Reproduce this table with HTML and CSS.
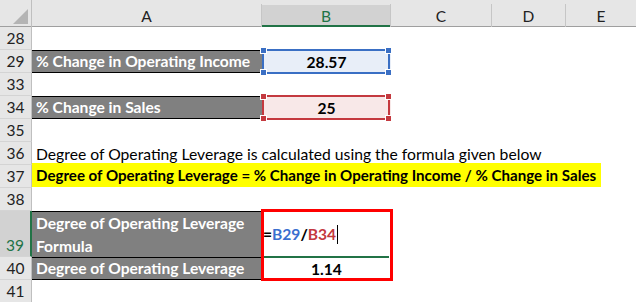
FILE: index.html
```html
<!DOCTYPE html>
<html>
<head>
<meta charset="utf-8">
<link rel="stylesheet" href="styles.css">
</head>
<body>
<div class="sheet">
  <div class="corner"><span class="tri"></span></div>
  <div class="colhead">A</div>
  <div class="colhead sel">B</div>
  <div class="colhead">C</div>
  <div class="colhead">D</div>
  <div class="colhead last">E</div>

  <div class="rowhead">28</div>
  <div class="cell"></div><div class="cell"></div><div class="cell"></div><div class="cell"></div><div class="cell"></div>

  <div class="rowhead">29</div>
  <div class="cell dark">% Change in Operating Income</div>
  <div class="cell num ref-blue">28.57<span class="refbox blue"><i class="sq tl"></i><i class="sq bl"></i><i class="sq tr"></i><i class="sq br"></i></span></div>
  <div class="cell"></div><div class="cell"></div><div class="cell"></div>

  <div class="rowhead">33</div>
  <div class="cell"></div><div class="cell"></div><div class="cell"></div><div class="cell"></div><div class="cell"></div>

  <div class="rowhead">34</div>
  <div class="cell dark">% Change in Sales</div>
  <div class="cell num ref-red">25<span class="refbox red"><i class="sq tl"></i><i class="sq bl"></i><i class="sq tr"></i><i class="sq br"></i></span></div>
  <div class="cell"></div><div class="cell"></div><div class="cell"></div>

  <div class="rowhead">35</div>
  <div class="cell"></div><div class="cell"></div><div class="cell"></div><div class="cell"></div><div class="cell"></div>

  <div class="rowhead">36</div>
  <div class="cell span plain">Degree of Operating Leverage is calculated using the formula given below</div>

  <div class="rowhead">37</div>
  <div class="cell span"><span class="hl">Degree of Operating Leverage = % Change in Operating Income / % Change in Sales</span></div>

  <div class="rowhead">38</div>
  <div class="cell"></div><div class="cell"></div><div class="cell"></div><div class="cell"></div><div class="cell"></div>

  <div class="rowhead active">39</div>
  <div class="cell dark wrap">Degree of Operating Leverage Formula</div>
  <div class="cell formula"><b>=</b><span class="fb">B29</span><b>/</b><span class="fr">B34</span><span class="caret"></span><span class="fill-line"></span></div>
  <div class="cell"></div><div class="cell"></div><div class="cell"></div>

  <div class="rowhead">40</div>
  <div class="cell dark">Degree of Operating Leverage</div>
  <div class="cell num">1.14<span class="redbox"></span></div>
  <div class="cell"></div><div class="cell"></div><div class="cell"></div>

  <div class="rowhead">41</div>
  <div class="cell"></div><div class="cell"></div><div class="cell"></div><div class="cell"></div><div class="cell"></div>
</div>
</body>
</html>
```

FILE: styles.css
```css
* { box-sizing: border-box; }
html, body { margin: 0; padding: 0; background: #fff; }
body {
  width: 636px;
  height: 302px;
  overflow: hidden;
  font-family: "Lato", "Carlito", "Liberation Sans", sans-serif;
  font-size: 15px;
  color: #000;
}
.sheet {
  display: grid;
  grid-template-columns: 32px 230px 129px 101px 74px 70px;
  grid-template-rows: 27px 23px 23px 23px 23px 23px 23px 23px 23px 46px 23px 23px;
}
.corner {
  background: #e6e6e6;
  border-right: 1px solid #bfbfbf;
  box-shadow: inset 0 -1px 0 #9f9f9f;
  position: relative;
}
.tri {
  position: absolute;
  right: 3px;
  bottom: 3px;
  width: 0; height: 0;
  border-left: 15px solid transparent;
  border-bottom: 15px solid #b4b4b4;
}
.colhead {
  background: #e6e6e6;
  border-right: 1px solid #c6c6c6;
  border-image: linear-gradient(to bottom, transparent 0 5px, #c6c6c6 5px) 1;
  box-shadow: inset 0 -1px 0 #9f9f9f;
  display: flex;
  align-items: center;
  justify-content: center;
  padding-top: 5px;
  font-size: 15.5px;
  color: #222;
}
.colhead.last { border-right: 0; }
.colhead.sel {
  background: linear-gradient(#e6e6e6 0 5px, #d2d2d2 5px);
  box-shadow: inset 0 -2px 0 #217346;
  color: #217346;
}
.rowhead {
  background: #e6e6e6;
  border-right: 1px solid #bfbfbf;
  border-bottom: 1px solid #d4d4d4;
  display: flex;
  align-items: flex-end;
  justify-content: center;
  padding-bottom: 1px;
  font-size: 15.5px;
  line-height: 20px;
  color: #222;
}
.rowhead.active {
  background: #d2d2d2;
  border-right: 2px solid #217346;
  color: #217346;
}
.cell {
  position: relative;
  display: flex;
  align-items: flex-end;
  padding: 0 4px 1px;
  line-height: 20px;
  white-space: nowrap;
}
.cell.span {
  grid-column: 2 / -1;
}
.plain { font-size: 15.7px; }
.hl {
  background: #ffff00;
  font-weight: 700;
  margin-left: -4px;
  padding: 2px 5px 1px 4px;
  line-height: 21px;
  font-size: 15.1px;
}
.dark {
  background: #808080;
  color: #fff;
  font-weight: 700;
  font-size: 15.6px;
  border-top: 1px solid #000;
  border-bottom: 1px solid #000;
}
.dark.wrap {
  white-space: normal;
  align-items: flex-start;
  line-height: 23px;
  padding-top: 0;
  border-bottom: 0;
}
.num {
  justify-content: center;
  font-weight: 700;
  font-size: 15.6px;
}
.ref-blue { background: #e8eef8; }
.ref-red { background: #f8e8e8; }
.refbox {
  position: absolute;
  left: 0; top: -1px; right: 1px; bottom: -1px;
  border: 2px solid;
}
.refbox.blue { border-color: #3a6fc4; color: #3a6fc4; }
.refbox.red { border-color: #c4393f; color: #c4393f; }
.sq {
  position: absolute;
  width: 5px; height: 5px;
  background: currentColor;
  outline: 1px solid #fff;
}
.sq.tl { left: -3px; top: -3px; }
.sq.bl { left: -3px; bottom: -3px; }
.sq.tr { right: -3px; top: -3px; }
.sq.br { right: -3px; bottom: -3px; }
.formula {
  align-items: center;
  padding: 0 1px;
  font-weight: 700;
  font-size: 15.6px;
}
.formula b { color: #000; }
.fb { color: #3a6fcf; }
.fr { color: #c4393f; }
.caret {
  display: inline-block;
  width: 1px;
  height: 19px;
  background: #000;
  margin-left: 1px;
}
.fill-line {
  position: absolute;
  left: 1px; right: 2px; bottom: -1px;
  height: 2px;
  background: #217346;
}
.redbox {
  position: absolute;
  left: -1px; top: -48px; right: -2px; bottom: -1px;
  border: 3px solid #ff0000;
}
```
